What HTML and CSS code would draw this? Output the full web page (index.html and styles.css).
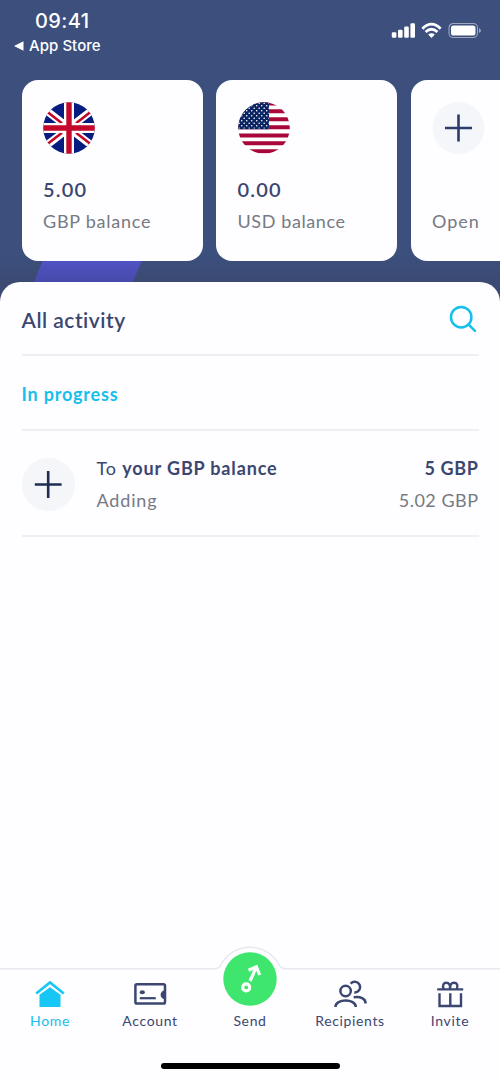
FILE: index.html
```html
<!DOCTYPE html>
<html lang="en">
<head>
<meta charset="utf-8">
<title>Home</title>
<link rel="stylesheet" href="styles.css">
</head>
<body>
<div class="screen">
  <header class="status">
    <div class="status-left">
      <div class="time">09:41</div>
      <div class="back"><svg width="10" height="10" viewBox="0 0 10 10"><path d="M0 5L9.5 .3V9.7Z" fill="#fff"/></svg><span>App Store</span></div>
    </div>
    <svg class="status-icons" width="92" height="18" viewBox="0 0 92 18">
      <g fill="#fff">
        <rect x="1.8" y="10.2" width="4.6" height="5.6" rx="1.2"/>
        <rect x="8" y="7.8" width="4.6" height="8" rx="1.2"/>
        <rect x="14.2" y="4.6" width="4.6" height="11.2" rx="1.2"/>
        <rect x="20.4" y="1.2" width="4.6" height="14.6" rx="1.2"/>
      </g>
      <g fill="none" stroke="#fff" stroke-width="2.8">
        <path d="M32.4 6.7Q41.5-2.4 50.6 6.7"/>
        <path d="M35.6 10Q41.5 4.4 47.4 10"/>
      </g>
      <path d="M38.2 12.6Q41.5 9.8 44.8 12.6L41.5 16Z" fill="#fff"/>
      <rect x="59" y="1.5" width="28.5" height="14" rx="4.3" fill="none" stroke="#fff" stroke-opacity=".5" stroke-width="1.1"/>
      <rect x="61" y="3.5" width="24.5" height="10" rx="2.6" fill="#fff"/>
      <path d="M89 6Q91 7 91 8.5T89 11Z" fill="#fff" fill-opacity=".5"/>
    </svg>
  </header>

  <section class="cards">
    <article class="card">
      <svg class="flag" viewBox="0 0 52 52">
        <clipPath id="disc"><circle cx="26" cy="26" r="25.8"/></clipPath>
        <g clip-path="url(#disc)">
          <rect width="52" height="52" fill="#061c80"/>
          <path d="M-6 1.4L58 50.6M58 1.4L-6 50.6" stroke="#fff" stroke-width="7.6"/>
          <path d="M4.8 10.2L19 21.2M47.2 10.2L33 21.2M4.8 41.8L19 30.8M47.2 41.8L33 30.8" stroke="#c4082b" stroke-width="2.6"/>
          <path d="M26 0V52M0 26H52" stroke="#fff" stroke-width="10"/>
          <path d="M26 0V52M0 26H52" stroke="#c4082b" stroke-width="5.4"/>
        </g>
      </svg>
      <div class="amount gbp">5.00</div>
      <div class="label gbp-label">GBP balance</div>
    </article>
    <article class="card">
      <svg class="flag" viewBox="0 0 52 52">
        <defs><pattern id="stars" width="5" height="5" patternUnits="userSpaceOnUse"><circle cx="1.2" cy="1.2" r=".8" fill="#fff"/><circle cx="3.7" cy="3.7" r=".8" fill="#fff"/></pattern></defs>
        <g clip-path="url(#disc)">
          <rect width="52" height="52" fill="#fff"/>
          <path d="M0 1.5H52M0 9.3H52M0 17.2H52M0 25.2H52M0 33.4H52M0 41.3H52M0 49.2H52" stroke="#a9073a" stroke-width="4"/>
          <rect width="31" height="27.2" fill="#0a2463"/>
          <rect width="31" height="26.5" fill="url(#stars)"/>
        </g>
      </svg>
      <div class="amount usd">0.00</div>
      <div class="label usd-label">USD balance</div>
    </article>
    <article class="card">
      <svg class="flag" viewBox="0 0 52 52"><circle cx="26.5" cy="26" r="26" fill="#f4f6fa"/><path d="M26.5 12.5V39.5M13 26H40" stroke="#2d3b6b" stroke-width="2.6"/></svg>
      <div class="amount">&nbsp;</div>
      <div class="label open-label">Open</div>
    </article>
    <svg class="ribbon" width="110" height="26" viewBox="0 0 110 26"><defs><linearGradient id="rib" x1="0" y1="0" x2="0" y2="1"><stop offset="0" stop-color="#5053c4"/><stop offset="1" stop-color="#474aa9"/></linearGradient></defs><path d="M10 0H109L100 22H1Z" fill="url(#rib)"/></svg>
  </section>

  <main class="sheet">
    <div class="heading">
      <h1>All activity</h1>
      <svg class="search" width="30" height="30" viewBox="0 0 30 30" fill="none" stroke="#16c0ec" stroke-width="2.5" stroke-linecap="round"><circle cx="12.2" cy="13.2" r="10.2"/><path d="M19.5 20.5L26 26.8"/></svg>
    </div>
    <h2>In progress</h2>
    <div class="activity">
      <svg class="add" viewBox="0 0 53 53"><circle cx="26.5" cy="26.5" r="26.5" fill="#f4f6fa"/><path d="M26.2 13.1V39.9M12.8 26.5H39.6" stroke="#1f2c54" stroke-width="2.6"/></svg>
      <div class="what">
        <div class="title">To <b>your GBP balance</b></div>
        <div class="sub adding">Adding</div>
      </div>
      <div class="value">
        <div class="title five"><b>5 GBP</b></div>
        <div class="sub paid">5.02 GBP</div>
      </div>
    </div>
  </main>

  <nav class="tabs">
    <svg class="edge" width="500" height="26" viewBox="0 0 500 26"><path d="M-2 22.7H214Q219 22.7 220.5 19.5A33 33 0 0 1 279.5 19.5Q281 22.7 286 22.7H502V30H-2Z" fill="#fefdff" stroke="#e9e8f0" stroke-width="1.5"/></svg>
    <a class="tab active">
      <svg width="34" height="30" viewBox="0 0 34 30"><path d="M3.2 14.5L17 3.4L30.8 14.5" fill="none" stroke="#16c6f5" stroke-width="2.6"/><path d="M6.5 15.7L17 8.3L27.5 15.7V28H6.5Z" fill="#16c6f5"/></svg>
      <span>Home</span>
    </a>
    <a class="tab">
      <svg width="34" height="30" viewBox="0 0 34 30"><rect x="2.4" y="5.2" width="29.6" height="19.4" rx="1.6" fill="none" stroke="#3b4770" stroke-width="2.5"/><ellipse cx="9.3" cy="13.2" rx="2.6" ry="2" fill="#3b4770"/><path d="M6.8 19.2H22.8" stroke="#3b4770" stroke-width="2.2"/><path d="M32.2 11Q27.6 12.2 27.6 15.8T32.2 20.6Z" fill="#3b4770"/></svg>
      <span>Account</span>
    </a>
    <a class="tab send">
      <svg class="send-icon" width="54" height="54" viewBox="0 0 54 54"><circle cx="27" cy="27" r="26.7" fill="#3ee66e"/><g fill="none" stroke="#fff" stroke-width="3.2"><circle cx="23.2" cy="35.4" r="3.5"/><path d="M27 29L33.2 15.4M25.5 18.2L33.4 14.8L36.7 23"/></g></svg>
      <span>Send</span>
    </a>
    <a class="tab">
      <svg width="34" height="30" viewBox="0 0 34 30" fill="none" stroke="#3b4770" stroke-width="2.5"><circle cx="12.6" cy="12" r="5.2"/><path d="M2.4 28C2.4 19.4 22.8 19.4 22.8 28"/><path d="M17.7 4.7A5.3 5.3 0 1 1 21.3 13.4"/><path d="M20.7 18.3C27.5 17.5 32.6 19.3 32.6 24.5"/></svg>
      <span>Recipients</span>
    </a>
    <a class="tab">
      <svg width="34" height="30" viewBox="0 0 34 30" fill="none" stroke="#3b4770" stroke-width="2.4"><path d="M4.2 10.4H30.2M6.5 14.2V27H28V14.2M17.3 14.2V27"/><path d="M10.7 10C9 6.2 10.6 3.8 13.3 3.8C16 3.8 17.7 6 16.8 10M17.3 10C16.6 6 18.4 3.8 21 3.8C24 3.8 25.3 6.2 23.8 10"/></svg>
      <span>Invite</span>
    </a>
  </nav>
  <div class="indicator"></div>
</div>
</body>
</html>
```
FILE: styles.css
```css
* { box-sizing: border-box; }
body { margin: 0; font-family: Lato, "Open Sans", sans-serif; color: #3b4770; }
svg { display: block; flex: none; }
h1, h2 { margin: 0; }
b { font-weight: 700; }

.screen {
  width: 500px;
  height: 1080px;
  overflow: hidden;
  display: flex;
  flex-direction: column;
  background: linear-gradient(#3c4f7d 0, #3c4f7d 255px, #3b4a72 282px, #3b4a72 320px);
}

.status {
  height: 80px;
  flex: none;
  display: flex;
  justify-content: space-between;
  padding: 9px 18px 0 14px;
  color: #fff;
  font-family: Inter, sans-serif;
}
.time { margin-left: 21px; font-size: 20px; line-height: 24px; font-weight: 500; letter-spacing: .4px; }
.back { display: flex; align-items: center; gap: 5px; margin-top: 3px; font-size: 15px; line-height: 20px; font-weight: 500; letter-spacing: .05px; }
.status-icons { margin-top: 13px; }

.cards {
  position: relative;
  height: 202px;
  flex: none;
  display: flex;
  gap: 13.5px;
  padding-left: 21.5px;
}
.card {
  position: relative;
  z-index: 1;
  flex: none;
  width: 181px;
  height: 181px;
  padding: 22px 21.5px;
  border-radius: 16px;
  background: #fefdff;
}
.ribbon { position: absolute; left: 33px; top: 180px; }
.flag { width: 52px; height: 52px; overflow: visible; }
.amount { margin-top: 23px; font-size: 20px; line-height: 24px; font-weight: 600; letter-spacing: 1.2px; }
.label { margin-top: 8px; font-size: 18px; line-height: 24px; color: #757a83; letter-spacing: .75px; }
.usd-label { letter-spacing: .6px; }
.open-label { letter-spacing: 1px; }

.sheet {
  position: relative;
  z-index: 2;
  flex: 1;
  padding: 0 21.5px;
  border-radius: 20px 20px 0 0;
  background: #fefdff;
}
.heading {
  height: 74px;
  display: flex;
  justify-content: space-between;
  padding-top: 24px;
  border-bottom: 2px solid #efeef4;
}
.heading h1 { font-size: 21px; line-height: 28px; font-weight: 600; letter-spacing: .5px; }
.search { margin-top: -2px; }
h2 {
  height: 75px;
  padding-top: 25.5px;
  border-bottom: 2px solid #efeef4;
  font-size: 18px;
  line-height: 24px;
  color: #16c0ec;
  letter-spacing: .8px;
}
.activity {
  height: 106px;
  display: flex;
  padding-top: 26.5px;
  border-bottom: 2px solid #efeef4;
}
.add { width: 53px; height: 53px; }
.what { margin-left: 22px; flex: 1; }
.value { text-align: right; }
.title, .sub { font-size: 18px; line-height: 24px; letter-spacing: .85px; white-space: nowrap; }
.title { margin-top: -1.5px; }
.sub { margin-top: 7.5px; color: #757a83; }
.five { letter-spacing: .6px; }
.paid { letter-spacing: .5px; }

.tabs {
  position: relative;
  z-index: 3;
  flex: none;
  height: 111px;
  display: grid;
  grid-template-columns: repeat(5, 1fr);
  background: #fefdff;
}
.edge { position: absolute; left: 0; top: -23px; }
.tab {
  display: flex;
  flex-direction: column;
  align-items: center;
  padding-top: 9.5px;
  font-size: 14px;
  line-height: 18px;
  letter-spacing: .65px;
}
.tab span { margin-top: 3.5px; }
.active { color: #16c0ec; }
.send { padding-top: 0; }
.send-icon { position: relative; margin-top: -17.5px; }
.send span { margin-top: 6.5px; }
.indicator {
  position: relative;
  z-index: 4;
  flex: none;
  width: 179px;
  height: 6px;
  margin: -17px auto 11px;
  border-radius: 3px;
  background: #000;
}
```
